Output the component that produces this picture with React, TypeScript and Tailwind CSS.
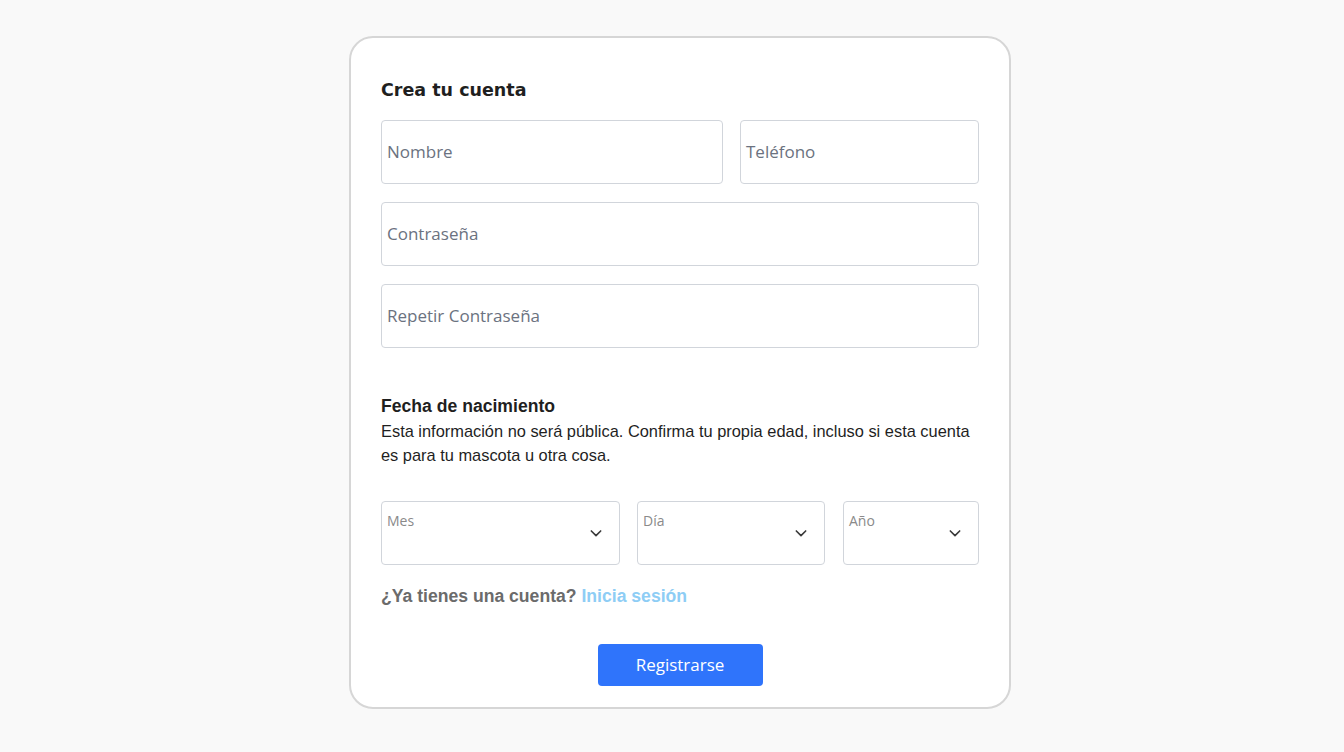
import React from "react";

function Chevron() {
  return (
    <svg width="14" height="14" viewBox="0 0 24 24" fill="none" stroke="#3a3a3a" strokeWidth="2.8" strokeLinecap="round" strokeLinejoin="round">
      <path d="M4 8.5l8 8 8-8" />
    </svg>
  );
}

function Field({ label, w }: { label: string; w: string }) {
  return (
    <div className={`${w} h-[64px] border border-[#d1d5db] rounded-[4px] flex items-center px-[5px]`}>
      <span className="text-[17px] text-[#6b7280]" style={{ fontFamily: '"Open Sans", "Noto Sans", sans-serif' }}>{label}</span>
    </div>
  );
}

function Select({ label, w }: { label: string; w: string }) {
  return (
    <div className={`${w} h-[64px] border border-[#d1d5db] rounded-[4px] relative`}>
      <span className="absolute left-[5px] top-[8px] text-[14px] text-[#8a8a8a]" style={{ fontFamily: '"Open Sans", "Noto Sans", sans-serif' }}>{label}</span>
      <span className="absolute right-[16px] top-[24px]"><Chevron /></span>
    </div>
  );
}

export default function App() {
  return (
    <div className="min-h-[752px] w-full bg-[#f9f9f9] flex justify-center pt-[36px] pl-[16px]" style={{ fontFamily: '"Liberation Sans", Arial, sans-serif' }}>
      <div className="w-[662px] h-[673px] bg-white border-2 border-[#d6d6d6] rounded-[24px] px-[30px] pt-[38px]">
        <h1 className="text-[17.5px] font-bold text-[#1f1f1f] leading-[24px] mt-[2px]" style={{ fontFamily: '"DejaVu Sans", sans-serif' }}>Crea tu cuenta</h1>
        <div className="flex gap-[17px] mt-[18px]">
          <Field label="Nombre" w="w-[342px]" />
          <Field label="Teléfono" w="w-[239px]" />
        </div>
        <div className="mt-[18px]"><Field label="Contraseña" w="w-full" /></div>
        <div className="mt-[18px]"><Field label="Repetir Contraseña" w="w-full" /></div>
        <h2 className="mt-[46px] text-[17.6px] font-bold text-[#1f1f1f] leading-[24px]">Fecha de nacimiento</h2>
        <p className="text-[16.4px] text-[#1f1f1f] leading-[24px] mt-[1px]">Esta información no será pública. Confirma tu propia edad, incluso si esta cuenta es para tu mascota u otra cosa.</p>
        <div className="flex gap-[17px] mt-[34px]">
          <Select label="Mes" w="w-[239px]" />
          <Select label="Día" w="w-[188px]" />
          <Select label="Año" w="w-[136px] ml-[1px]" />
        </div>
        <p className="mt-[19px] text-[17.6px] font-bold text-[#6b6b6b] leading-[24px]">¿Ya tienes una cuenta? <span className="text-[#8ecdf5]">Inicia sesión</span></p>
        <div className="flex justify-center mt-[36px]">
          <button className="w-[165px] h-[42px] bg-[#2f74fb] rounded-[4px] text-white text-[17px]" style={{ fontFamily: '"Open Sans", "Noto Sans", sans-serif' }}>Registrarse</button>
        </div>
      </div>
    </div>
  );
}
